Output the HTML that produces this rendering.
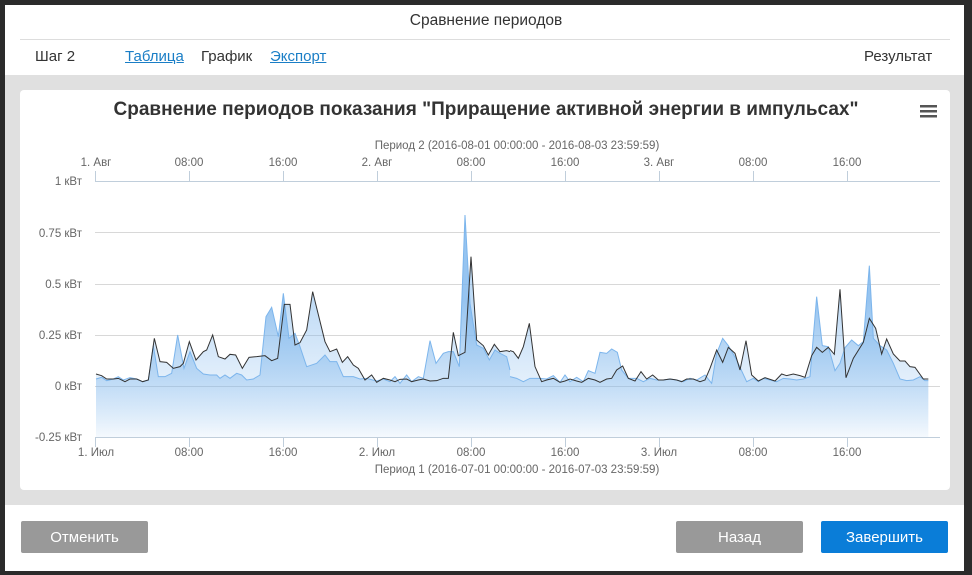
<!DOCTYPE html>
<html><head><meta charset="utf-8"><style>
body{margin:0;width:972px;height:575px;background:#2b2b2b;font-family:"Liberation Sans",sans-serif;position:relative;overflow:hidden}
.modal{position:absolute;left:5px;top:5px;width:959px;height:566px;background:#fff}
.t{position:absolute;font-size:15px;color:#333}
.btn{position:absolute;top:521px;height:32px;width:127px;color:#fff;font-size:15px;text-align:center;line-height:33px;border-radius:2px}
a{color:#1a7ec6;text-decoration:underline}
svg text{font-family:"Liberation Sans",sans-serif}
</style></head><body>
<div class="modal"></div>
<div class="t" style="left:0;width:972px;text-align:center;top:12px;font-size:15.5px">Сравнение периодов</div>
<div style="position:absolute;left:20px;top:39px;width:930px;height:1px;background:#ddd"></div>
<div class="t" style="left:35px;top:48px">Шаг 2</div>
<div class="t" style="left:125px;top:48px"><a>Таблица</a></div>
<div class="t" style="left:201px;top:48px">График</div>
<div class="t" style="left:270px;top:48px"><a>Экспорт</a></div>
<div class="t" style="left:864px;top:48px">Результат</div>
<div style="position:absolute;left:5px;top:75px;width:959px;height:430px;background:#e0e0e0"></div>
<div style="position:absolute;left:20px;top:90px;width:930px;height:400px;background:#fff;border-radius:4px"></div>
<svg style="position:absolute;left:0;top:0" width="972" height="575">
<defs>
<linearGradient id="g" gradientUnits="userSpaceOnUse" x1="0" y1="300" x2="0" y2="711"><stop offset="0" stop-color="#7cb5ec" stop-opacity="0.8"/><stop offset="1" stop-color="#7cb5ec" stop-opacity="0.05"/></linearGradient>
</defs>
<text x="486" y="115" text-anchor="middle" font-size="19" font-weight="bold" fill="#333">Сравнение периодов показания "Приращение активной энергии в импульсах"</text>
<g fill="#555"><rect x="920" y="105" width="17" height="2.5"/><rect x="920" y="110" width="17" height="2.5"/><rect x="920" y="115" width="17" height="2.5"/></g>
<g stroke="#d8d8d8" stroke-width="1"><line x1="95" x2="940" y1="232.5" y2="232.5"/><line x1="95" x2="940" y1="284.5" y2="284.5"/><line x1="95" x2="940" y1="335.5" y2="335.5"/><line x1="95" x2="940" y1="386.5" y2="386.5"/></g>
<g stroke="#c0cedb"><line x1="95" x2="940" y1="181.5" y2="181.5"/><line x1="95" x2="940" y1="437.5" y2="437.5"/>
<line x1="95.5" x2="95.5" y1="171" y2="181"/><line x1="189.5" x2="189.5" y1="171" y2="181"/><line x1="283.5" x2="283.5" y1="171" y2="181"/><line x1="377.5" x2="377.5" y1="171" y2="181"/><line x1="471.5" x2="471.5" y1="171" y2="181"/><line x1="565.5" x2="565.5" y1="171" y2="181"/><line x1="659.5" x2="659.5" y1="171" y2="181"/><line x1="753.5" x2="753.5" y1="171" y2="181"/><line x1="847.5" x2="847.5" y1="171" y2="181"/>
<line x1="95.5" x2="95.5" y1="437" y2="447"/><line x1="189.5" x2="189.5" y1="437" y2="447"/><line x1="283.5" x2="283.5" y1="437" y2="447"/><line x1="377.5" x2="377.5" y1="437" y2="447"/><line x1="471.5" x2="471.5" y1="437" y2="447"/><line x1="565.5" x2="565.5" y1="437" y2="447"/><line x1="659.5" x2="659.5" y1="437" y2="447"/><line x1="753.5" x2="753.5" y1="437" y2="447"/><line x1="847.5" x2="847.5" y1="437" y2="447"/></g>
<g font-size="11.5" fill="#666" text-anchor="end"><text x="82" y="185">1 кВт</text><text x="82" y="237">0.75 кВт</text><text x="82" y="288">0.5 кВт</text><text x="82" y="339">0.25 кВт</text><text x="82" y="390">0 кВт</text><text x="82" y="441">-0.25 кВт</text></g>
<g font-size="11.5" fill="#666" text-anchor="middle">
<text x="517" y="149">Период 2 (2016-08-01 00:00:00 - 2016-08-03 23:59:59)</text>
<text x="96" y="166">1. Авг</text><text x="189" y="166">08:00</text><text x="283" y="166">16:00</text><text x="377" y="166">2. Авг</text><text x="471" y="166">08:00</text><text x="565" y="166">16:00</text><text x="659" y="166">3. Авг</text><text x="753" y="166">08:00</text><text x="847" y="166">16:00</text>
<text x="96" y="456">1. Июл</text><text x="189" y="456">08:00</text><text x="283" y="456">16:00</text><text x="377" y="456">2. Июл</text><text x="471" y="456">08:00</text><text x="565" y="456">16:00</text><text x="659" y="456">3. Июл</text><text x="753" y="456">08:00</text><text x="847" y="456">16:00</text>
<text x="517" y="473">Период 1 (2016-07-01 00:00:00 - 2016-07-03 23:59:59)</text></g>
<g transform="translate(90,200) scale(0.33333)">
<polygon fill="url(#g)" points="18,711 18,537 35,532 50,542 70,537 85,530 100,540 120,533 140,537 158,545 175,540 190,437 205,530 225,530 245,520 263,405 282,505 300,455 320,505 340,522 360,525 380,525 390,535 405,525 420,535 440,520 455,525 470,540 490,537 510,525 528,350 545,322 565,410 580,280 597,415 615,400 630,440 650,500 680,490 705,465 720,485 740,485 760,530 790,530 810,537 830,535 860,543 880,537 900,545 915,530 930,550 950,525 965,545 985,530 1000,535 1020,422 1038,490 1060,460 1075,455 1090,455 1108,500 1125,45 1140,310 1160,435 1180,445 1198,480 1215,450 1230,460 1250,470 1260,510 1260,711"/>
<polygon fill="url(#g)" points="18,711 18,522 35,527 50,537 70,537 85,535 105,545 120,537 140,537 158,545 175,540 193,415 210,485 230,487 250,505 270,500 280,490 298,425 318,480 340,455 350,450 368,405 385,470 405,477 420,463 437,465 457,505 477,472 500,470 525,467 545,482 563,475 583,313 600,313 615,435 630,428 650,390 668,275 705,425 720,455 740,447 757,487 773,470 790,495 805,505 825,540 845,525 860,547 880,535 900,540 915,545 930,538 950,537 965,545 985,540 1000,537 1020,543 1040,542 1060,535 1075,535 1090,397 1105,467 1125,457 1143,170 1160,420 1180,437 1195,465 1213,433 1230,455 1250,452 1260,455 1260,711" opacity="0.6"/>
<polyline fill="none" stroke="#7cb5ec" stroke-width="3" points="18,537 35,532 50,542 70,537 85,530 100,540 120,533 140,537 158,545 175,540 190,437 205,530 225,530 245,520 263,405 282,505 300,455 320,505 340,522 360,525 380,525 390,535 405,525 420,535 440,520 455,525 470,540 490,537 510,525 528,350 545,322 565,410 580,280 597,415 615,400 630,440 650,500 680,490 705,465 720,485 740,485 760,530 790,530 810,537 830,535 860,543 880,537 900,545 915,530 930,550 950,525 965,545 985,530 1000,535 1020,422 1038,490 1060,460 1075,455 1090,455 1108,500 1125,45 1140,310 1160,435 1180,445 1198,480 1215,450 1230,460 1250,470 1260,510"/>
<polyline fill="none" stroke="#333" stroke-width="3" points="18,522 35,527 50,537 70,537 85,535 105,545 120,537 140,537 158,545 175,540 193,415 210,485 230,487 250,505 270,500 280,490 298,425 318,480 340,455 350,450 368,405 385,470 405,477 420,463 437,465 457,505 477,472 500,470 525,467 545,482 563,475 583,313 600,313 615,435 630,428 650,390 668,275 705,425 720,455 740,447 757,487 773,470 790,495 805,505 825,540 845,525 860,547 880,535 900,540 915,545 930,538 950,537 965,545 985,540 1000,537 1020,543 1040,542 1060,535 1075,535 1090,397 1105,467 1125,457 1143,170 1160,420 1180,437 1195,465 1213,433 1230,455 1250,452 1260,455"/>
</g>
<g transform="translate(510,200) scale(0.33333)">
<polygon fill="url(#g)" points="0,711 0,530 20,535 40,545 60,535 90,535 110,537 130,527 150,547 165,525 180,545 200,532 220,545 235,512 255,520 270,457 290,460 305,447 322,457 335,510 355,535 380,535 400,545 420,535 440,540 460,540 480,537 500,540 520,545 540,535 560,540 585,525 605,550 620,460 638,415 655,437 680,480 710,545 730,535 745,545 760,535 780,540 800,545 820,535 840,537 860,540 880,537 900,530 920,290 937,437 955,440 975,512 990,490 1005,443 1025,420 1045,437 1060,425 1078,197 1090,415 1110,437 1130,450 1150,490 1170,537 1190,542 1210,540 1230,530 1245,542 1255,542 1255,711"/>
<polygon fill="url(#g)" opacity="0.6" points="0,711 0,452 10,455 25,475 40,440 58,370 75,500 95,545 110,540 130,535 150,547 165,543 180,537 200,543 215,547 235,535 255,540 270,547 290,537 305,535 320,510 338,498 355,535 375,543 393,515 410,537 428,525 445,540 460,540 480,537 500,540 515,545 530,537 550,537 570,545 585,540 600,505 620,450 638,487 655,442 675,460 690,510 708,422 725,525 745,543 765,533 795,543 815,522 830,527 850,522 870,527 885,532 905,467 920,442 937,457 955,442 973,463 990,268 1008,533 1030,475 1060,427 1078,355 1097,385 1115,462 1130,417 1150,462 1170,483 1185,483 1200,500 1215,502 1240,537 1255,537 1255,711"/>
<polyline fill="none" stroke="#7cb5ec" stroke-width="3" points="0,530 20,535 40,545 60,535 90,535 110,537 130,527 150,547 165,525 180,545 200,532 220,545 235,512 255,520 270,457 290,460 305,447 322,457 335,510 355,535 380,535 400,545 420,535 440,540 460,540 480,537 500,540 520,545 540,535 560,540 585,525 605,550 620,460 638,415 655,437 680,480 710,545 730,535 745,545 760,535 780,540 800,545 820,535 840,537 860,540 880,537 900,530 920,290 937,437 955,440 975,512 990,490 1005,443 1025,420 1045,437 1060,425 1078,197 1090,415 1110,437 1130,450 1150,490 1170,537 1190,542 1210,540 1230,530 1245,542 1255,542"/>
<polyline fill="none" stroke="#333" stroke-width="3" points="0,452 10,455 25,475 40,440 58,370 75,500 95,545 110,540 130,535 150,547 165,543 180,537 200,543 215,547 235,535 255,540 270,547 290,537 305,535 320,510 338,498 355,535 375,543 393,515 410,537 428,525 445,540 460,540 480,537 500,540 515,545 530,537 550,537 570,545 585,540 600,505 620,450 638,487 655,442 675,460 690,510 708,422 725,525 745,543 765,533 795,543 815,522 830,527 850,522 870,527 885,532 905,467 920,442 937,457 955,442 973,463 990,268 1008,533 1030,475 1060,427 1078,355 1097,385 1115,462 1130,417 1150,462 1170,483 1185,483 1200,500 1215,502 1240,537 1255,537"/>
</g>
</svg>
<div class="btn" style="left:21px;background:#999">Отменить</div>
<div class="btn" style="left:676px;background:#999">Назад</div>
<div class="btn" style="left:821px;background:#0a7dd8">Завершить</div>
</body></html>
